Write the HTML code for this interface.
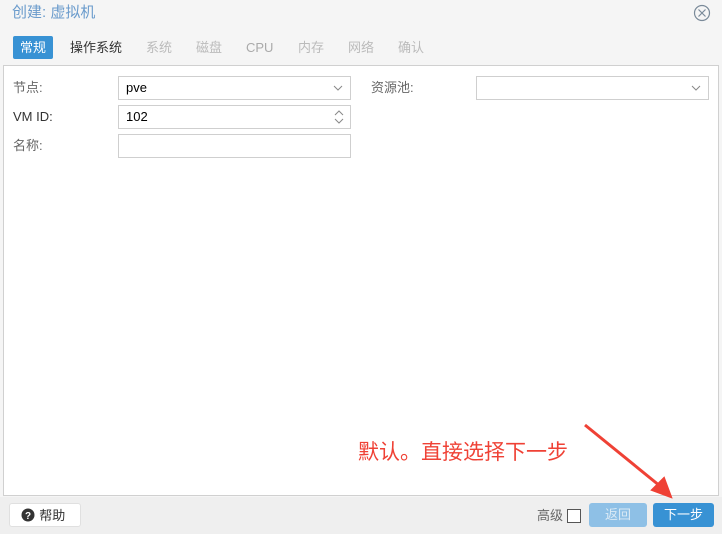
<!DOCTYPE html><html><head><meta charset="utf-8"><style>
*{margin:0;padding:0;box-sizing:border-box}
body{width:722px;height:534px;background:#f5f5f5;font-family:"Liberation Sans","Noto Sans CJK SC",sans-serif;font-size:13px;position:relative;overflow:hidden;color:#333;line-height:16px}
.a{position:absolute}
.title{left:12px;top:4px;font-size:15px;color:#6a9bcc;line-height:18px}
.tab{top:36px;height:23px;line-height:23px;font-size:13px;color:#bbb}
.panel{left:3px;top:65px;width:716px;height:431px;background:#fff;border:1px solid #d0d0d0}
.lbl{left:13px;color:#666;font-size:13px}
.inp{left:118px;width:233px;height:24px;border:1px solid #cfcfcf;background:#fff;font-size:13px;color:#000;padding-left:7px;line-height:22px}
.foot{left:0;top:497px;width:722px;height:37px;background:#efefef}
.btn{height:24px;border-radius:3px;text-align:center;line-height:24px;font-size:13px}
</style></head><body>
<div class="a title">创建: 虚拟机</div>
<svg class="a" style="left:693px;top:4px" width="18" height="18"><circle cx="9" cy="9" r="7.5" fill="none" stroke="#7a8a99" stroke-width="1.2"/><path d="M5.5 5.5L12.5 12.5M12.5 5.5L5.5 12.5" stroke="#7a8a99" stroke-width="1.2"/></svg>
<div class="a tab" style="left:13px;width:40px;background:#3892d4;color:#fff;text-align:center;border-radius:2px">常规</div>
<div class="a tab" style="left:70px;color:#333">操作系统</div>
<div class="a tab" style="left:146px">系统</div>
<div class="a tab" style="left:196px">磁盘</div>
<div class="a tab" style="left:246px;color:#aaa">CPU</div>
<div class="a tab" style="left:298px">内存</div>
<div class="a tab" style="left:348px">网络</div>
<div class="a tab" style="left:398px">确认</div>
<div class="a panel"></div>
<div class="a lbl" style="top:80px">节点:</div>
<div class="a lbl" style="top:109px;color:#333">VM ID:</div>
<div class="a lbl" style="top:138px">名称:</div>
<div class="a lbl" style="left:371px;top:80px">资源池:</div>
<div class="a inp" style="top:76px">pve<svg class="a" style="right:7px;top:8px" width="10" height="7"><path d="M1 1L5 5L9 1" fill="none" stroke="#888"/></svg></div>
<div class="a inp" style="top:105px">102<svg class="a" style="right:6px;top:3px" width="10" height="16"><path d="M1 6L5 2L9 6M1 10L5 14L9 10" fill="none" stroke="#888"/></svg></div>
<div class="a inp" style="top:134px"></div>
<div class="a inp" style="left:476px;width:233px;top:76px"><svg class="a" style="right:7px;top:8px" width="10" height="7"><path d="M1 1L5 5L9 1" fill="none" stroke="#888"/></svg></div>
<div class="a" style="left:358px;top:440px;font-size:21px;line-height:26px;color:#ef4135">默认。直接选择下一步</div>
<div class="a foot"></div>
<div class="a btn" style="left:9px;top:503px;width:72px;background:#fff;border:1px solid #e0e0e0;color:#333">&nbsp;&nbsp;&nbsp;&nbsp;帮助</div>
<svg class="a" style="left:21px;top:508px" width="14" height="14"><circle cx="7" cy="7" r="6.5" fill="#333"/><text x="7" y="11" font-size="10" font-weight="bold" fill="#fff" text-anchor="middle" font-family="Liberation Sans">?</text></svg>
<div class="a" style="left:537px;top:508px;color:#666">高级</div>
<div class="a" style="left:567px;top:509px;width:14px;height:14px;border:1px solid #555;background:#fff"></div>
<div class="a btn" style="left:589px;top:503px;width:58px;background:#8ec0e6;color:#dbeaf5">返回</div>
<div class="a btn" style="left:653px;top:503px;width:61px;background:#3892d4;color:#fff">下一步</div>
<svg class="a" style="left:0;top:0" width="722" height="534"><path d="M585 425L660 486" stroke="#ef4135" stroke-width="3"/><path d="M671 497L652 490L664 478Z" fill="#ef4135" stroke="#ef4135" stroke-width="2"/></svg>
</body></html>
